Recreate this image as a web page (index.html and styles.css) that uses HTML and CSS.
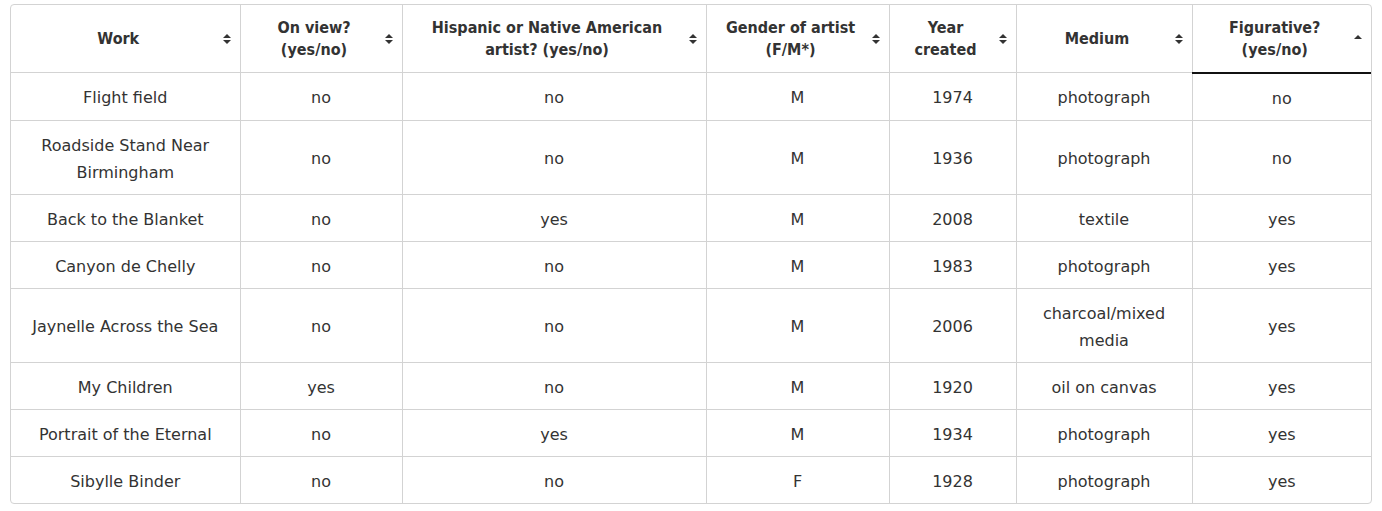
FILE: index.html
```html
<!DOCTYPE html>
<html lang="en">
<head>
<meta charset="utf-8">
<title>Works table</title>
<link rel="stylesheet" href="styles.css">
</head>
<body>
<div class="table-wrap">
  <table class="works">
    <colgroup>
      <col class="c-work">
      <col class="c-view">
      <col class="c-hisp">
      <col class="c-gender">
      <col class="c-year">
      <col class="c-medium">
      <col class="c-fig">
    </colgroup>
    <thead>
      <tr>
        <th>Work<svg class="sort" viewBox="0 0 8 12"><path d="M0 5 L4 1 L8 5 Z M0 7 L4 11 L8 7 Z"/></svg></th>
        <th>On view?<br>(yes/no)<svg class="sort" viewBox="0 0 8 12"><path d="M0 5 L4 1 L8 5 Z M0 7 L4 11 L8 7 Z"/></svg></th>
        <th>Hispanic or Native American<br>artist? (yes/no)<svg class="sort" viewBox="0 0 8 12"><path d="M0 5 L4 1 L8 5 Z M0 7 L4 11 L8 7 Z"/></svg></th>
        <th>Gender of artist<br>(F/M*)<svg class="sort" viewBox="0 0 8 12"><path d="M0 5 L4 1 L8 5 Z M0 7 L4 11 L8 7 Z"/></svg></th>
        <th>Year<br>created<svg class="sort" viewBox="0 0 8 12"><path d="M0 5 L4 1 L8 5 Z M0 7 L4 11 L8 7 Z"/></svg></th>
        <th>Medium<svg class="sort" viewBox="0 0 8 12"><path d="M0 5 L4 1 L8 5 Z M0 7 L4 11 L8 7 Z"/></svg></th>
        <th class="sorted">Figurative?<br>(yes/no)<svg class="sort" viewBox="0 0 8 12"><path d="M0 7 L4 3 L8 7 Z"/></svg></th>
      </tr>
    </thead>
    <tbody>
      <tr><td>Flight field</td><td>no</td><td>no</td><td>M</td><td>1974</td><td>photograph</td><td>no</td></tr>
      <tr><td>Roadside Stand Near<br>Birmingham</td><td>no</td><td>no</td><td>M</td><td>1936</td><td>photograph</td><td>no</td></tr>
      <tr><td>Back to the Blanket</td><td>no</td><td>yes</td><td>M</td><td>2008</td><td>textile</td><td>yes</td></tr>
      <tr><td>Canyon de Chelly</td><td>no</td><td>no</td><td>M</td><td>1983</td><td>photograph</td><td>yes</td></tr>
      <tr><td>Jaynelle Across the Sea</td><td>no</td><td>no</td><td>M</td><td>2006</td><td>charcoal/mixed<br>media</td><td>yes</td></tr>
      <tr><td>My Children</td><td>yes</td><td>no</td><td>M</td><td>1920</td><td>oil on canvas</td><td>yes</td></tr>
      <tr><td>Portrait of the Eternal</td><td>no</td><td>yes</td><td>M</td><td>1934</td><td>photograph</td><td>yes</td></tr>
      <tr><td>Sibylle Binder</td><td>no</td><td>no</td><td>F</td><td>1928</td><td>photograph</td><td>yes</td></tr>
    </tbody>
  </table>
</div>
</body>
</html>
```
FILE: styles.css
```css
html, body {
  margin: 0;
  padding: 0;
  background: #ffffff;
}

body {
  padding: 4px 10px;
  font-family: "DejaVu Sans", sans-serif;
  font-size: 16px;
  color: #333333;
}

.table-wrap {
  width: 1360px;
  border: 1px solid #d3d3d3;
  border-radius: 4px;
  overflow: hidden;
}

.works {
  width: 1360px;
  border-collapse: collapse;
  table-layout: fixed;
}

.c-work { width: 229px; }
.c-view { width: 162px; }
.c-hisp { width: 304px; }
.c-gender { width: 183px; }
.c-year { width: 127px; }
.c-medium { width: 176px; }
.c-fig { width: 179px; }

.works th,
.works td {
  border: 1px solid #d3d3d3;
  text-align: center;
  vertical-align: middle;
}

.works tr > :first-child { border-left: none; }
.works tr > :last-child { border-right: none; }
.works thead th { border-top: none; }
.works tbody tr:last-child td { border-bottom: none; }

.works th {
  position: relative;
  font-family: "DejaVu Sans Condensed", "DejaVu Sans", sans-serif;
  font-weight: bold;
  line-height: 22px;
  padding: 12px 24px 11px 10px;
  color: #333333;
}

.works th.sorted {
  border-bottom: 2px solid #111111;
  padding-bottom: 10px;
}

.sort {
  position: absolute;
  right: 9px;
  top: 50%;
  width: 8px;
  height: 12px;
  margin-top: -6px;
  fill: #333333;
}

.works td {
  line-height: 27px;
  padding: 11px 8px 8px;
}
```
